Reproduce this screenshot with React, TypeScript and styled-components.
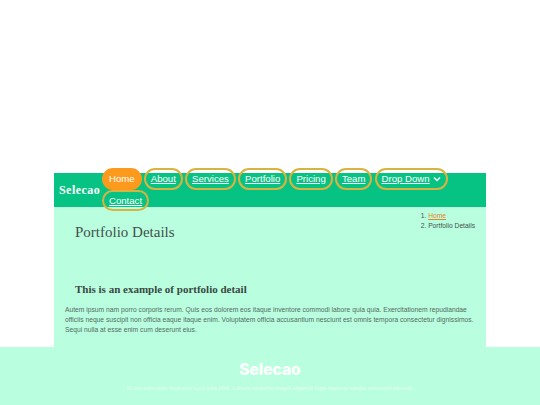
import React from 'react'
import styled, { createGlobalStyle } from 'styled-components'

const NAV_ITEMS = ['Home', 'About', 'Services', 'Portfolio', 'Pricing', 'Team', 'Drop Down', 'Contact']

const GlobalStyle = createGlobalStyle`
    html, body {
        margin: 0;
        padding: 0;
        background: #fff;
        font-family: "Liberation Sans", Arial, sans-serif;
    }
`

const Page = styled.div`
    padding-top: 173px;
    height: 232px;
    overflow: hidden;
    display: flex;
    flex-direction: column;
`

const Container = styled.div`
    width: 432px;
    margin: 0 auto;
    background: #b9ffdf;
    height: 174px;
    flex: none;
`

const Header = styled.header`
    height: 34px;
    background: #06c384;
    display: flex;
    align-items: flex-start;
    padding-left: 5px;
`

const Logo = styled.a`
    font-family: "Liberation Serif", serif;
    font-weight: 700;
    font-size: 12px;
    letter-spacing: 0.45px;
    color: #fff;
    line-height: 34px;
    width: 43px;
    flex: none;
`

const Nav = styled.nav`
    flex: 1;
    display: flex;
    flex-wrap: wrap;
    align-content: flex-start;
    gap: 0 2.2px;
    font-size: 9.6px;
    margin-top: -5px;
`

const NavLink = styled.a<{ active?: boolean }>`
    display: block;
    height: 21.5px;
    line-height: 17.5px;
    box-sizing: border-box;
    padding: 0 5px;
    border-radius: 11px;
    border: 2px solid ${({ active }) => (active ? '#fc9a1e' : '#d9b340')};
    background: ${({ active }) => (active ? '#fc9a1e' : 'transparent')};
    color: #fff;
    text-decoration: ${({ active }) => (active ? 'none' : 'underline')};
    white-space: nowrap;
`

const Chevron = styled.svg`
    width: 8px;
    height: 8px;
    margin-left: 3px;
    vertical-align: -0.5px;
`

const TitleRow = styled.div`
    display: flex;
    justify-content: space-between;
    height: 68px;
`

const PageTitle = styled.h2`
    margin: 16px 0 0 21px;
    font-family: "Liberation Serif", serif;
    font-weight: 400;
    font-size: 15px;
    line-height: 18px;
    color: #444f4b;
`

const Crumbs = styled.ol`
    margin: 4px 11px 0 0;
    padding: 0 0 0 14px;
    font-size: 6.7px;
    line-height: 10px;
    color: #444f4b;
`

const Crumb = styled.li`
    margin: 0;
`

const CrumbLink = styled.a`
    color: #e0862a;
    text-decoration: underline;
`

const Detail = styled.section`
    padding: 7px 11px 0;
`

const DetailTitle = styled.h3`
    margin: 0 0 9px 10px;
    font-family: "Liberation Serif", serif;
    font-weight: 700;
    font-size: 11px;
    line-height: 14px;
    color: #3a4743;
`

const DetailText = styled.p`
    margin: 0;
    font-size: 6.72px;
    line-height: 10px;
    color: #55695f;
`

const Footer = styled.footer`
    flex: 1;
    background: #b9ffdf;
    text-align: center;
    color: #fff;
    padding-top: 14px;
`

const FooterTitle = styled.h3`
    margin: 0;
    font-family: Inter, sans-serif;
    font-weight: 800;
    font-size: 15.5px;
    line-height: 18px;
`

const FooterText = styled.p`
    margin: 5px 0 0;
    font-size: 5.9px;
    line-height: 9px;
    opacity: 0.6;
`

export default function App() {
    return (
        <Page>
            <GlobalStyle />
            <Container>
                <Header>
                    <Logo>Selecao</Logo>
                    <Nav>
                        {NAV_ITEMS.map((v) => (
                            <NavLink key={v} active={v === 'Home'}>
                                {v}
                                {v === 'Drop Down' && (
                                    <Chevron viewBox="0 0 16 16" fill="none" stroke="#fff" strokeWidth="3">
                                        <path d="M2 5l6 6 6-6" />
                                    </Chevron>
                                )}
                            </NavLink>
                        ))}
                    </Nav>
                </Header>
                <TitleRow>
                    <PageTitle>Portfolio Details</PageTitle>
                    <Crumbs>
                        <Crumb><CrumbLink>Home</CrumbLink></Crumb>
                        <Crumb>Portfolio Details</Crumb>
                    </Crumbs>
                </TitleRow>
                <Detail>
                    <DetailTitle>This is an example of portfolio detail</DetailTitle>
                    <DetailText>
                        Autem ipsum nam porro corporis rerum. Quis eos dolorem eos itaque inventore commodi labore quia quia. Exercitationem repudiandae officiis neque suscipit non officia eaque itaque enim. Voluptatem officia accusantium nesciunt est omnis tempora consectetur dignissimos. Sequi nulla at esse enim cum deserunt eius.
                    </DetailText>
                </Detail>
            </Container>
            <Footer>
                <FooterTitle>Selecao</FooterTitle>
                <FooterText>Et aut eum quis fuga eos sunt ipsa nihil. Labore corporis magni eligendi fuga maxime saepe commodi placeat.</FooterText>
            </Footer>
        </Page>
    )
}
